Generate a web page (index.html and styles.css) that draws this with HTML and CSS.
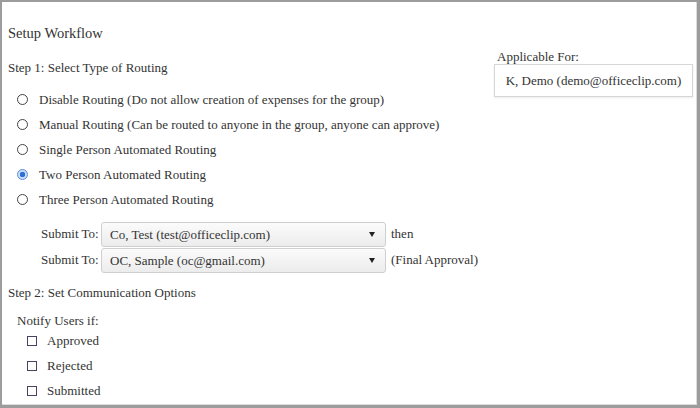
FILE: index.html
```html
<!DOCTYPE html>
<html lang="en">
<head>
    <meta charset="UTF-8">
    <meta name="viewport" content="width=device-width, initial-scale=1.0">
    <title>Setup Workflow</title>
    <link rel="stylesheet" href="styles.css">
</head>
<body>
    <div class="page">
        <h2 class="title">Setup Workflow</h2>
        <div class="layout">
            <section class="main">
                <h4 class="step">Step 1: Select Type of Routing</h4>
                <div class="options">
                    <label class="option"><input type="radio" name="routing"> Disable Routing (Do not allow creation of expenses for the group)</label>
                    <label class="option"><input type="radio" name="routing"> Manual Routing (Can be routed to anyone in the group, anyone can approve)</label>
                    <label class="option"><input type="radio" name="routing"> Single Person Automated Routing</label>
                    <label class="option"><input type="radio" name="routing" checked> Two Person Automated Routing</label>
                    <label class="option"><input type="radio" name="routing"> Three Person Automated Routing</label>
                </div>
                <div class="submits">
                    <div class="submit-row">
                        <span class="submit-label">Submit To:</span>
                        <span class="select-wrap">
                            <select>
                                <option>Co, Test (test@officeclip.com)</option>
                            </select>
                        </span>
                        <span class="after">then</span>
                    </div>
                    <div class="submit-row">
                        <span class="submit-label">Submit To:</span>
                        <span class="select-wrap">
                            <select>
                                <option>OC, Sample (oc@gmail.com)</option>
                            </select>
                        </span>
                        <span class="after">(Final Approval)</span>
                    </div>
                </div>
                <h4 class="step step-two">Step 2: Set Communication Options</h4>
                <div class="notify">
                    <div class="notify-title">Notify Users if:</div>
                    <label class="check"><input type="checkbox"> Approved</label>
                    <label class="check"><input type="checkbox"> Rejected</label>
                    <label class="check"><input type="checkbox"> Submitted</label>
                </div>
            </section>
            <aside class="applicable">
                <div class="applicable-label">Applicable For:</div>
                <div class="applicable-box">K, Demo (demo@officeclip.com)</div>
            </aside>
        </div>
    </div>
</body>
</html>
```

FILE: styles.css
```css
* { margin: 0; padding: 0; box-sizing: border-box; }
body { font-family: 'Liberation Serif', 'Times New Roman', serif; font-size: 13px; color: #333; background: #fff; }
.page { height: 408px; border: 2px solid #9c9c9c; border-right-width: 3px; border-bottom-width: 3px; box-shadow: inset -1px -1px 0 #dcdcdc; padding: 21px 4px 0 6px; overflow: hidden; }
.title { font-size: 14.5px; font-weight: normal; line-height: 20px; }
.layout { display: flex; justify-content: space-between; align-items: flex-start; }
.main { flex: 1; }
.step { font-size: 13px; font-weight: normal; line-height: 18px; margin-top: 16px; }
.options { margin-top: 10px; }
.option { display: flex; align-items: center; height: 25px; padding-left: 9px; }
.option input { appearance: none; width: 11px; height: 11px; border: 1px solid #444; border-radius: 50%; margin-right: 11px; background: #fff; }
.option input:checked { border-color: #5b8fd9; background: radial-gradient(circle, #2e6fd8 0 2.5px, #c9dcf6 3px); }
.submits { margin-top: 9px; padding-left: 33px; }
.submit-row { display: flex; align-items: center; height: 26px; }
.submit-label { width: 60px; }
.select-wrap { position: relative; }
.select-wrap select { appearance: none; width: 285px; height: 25px; padding-left: 8px; border: 1px solid #cfcfcf; border-radius: 3px; background: linear-gradient(#fbfbfb, #ececec); font-family: inherit; font-size: 13px; color: #333; }
.select-wrap::after { content: ''; position: absolute; right: 11px; top: 10px; border-left: 3.5px solid transparent; border-right: 3.5px solid transparent; border-top: 5px solid #222; pointer-events: none; }
.after { margin-left: 5px; }
.step-two { margin-top: 11px; }
.notify { margin-top: 11px; padding-left: 9px; }
.notify-title { line-height: 15px; }
.check { display: flex; align-items: center; height: 25px; padding-left: 10px; }
.check input { appearance: none; width: 10px; height: 10px; border: 1px solid #4a4060; margin-right: 10px; background: #fff; }
.applicable { width: 199px; margin-top: 6px; }
.applicable-label { padding-left: 3px; line-height: 15px; }
.applicable-box { height: 33px; line-height: 31px; text-align: center; border: 1px solid #d6d6d6; box-shadow: 0 1px 2px rgba(0, 0, 0, 0.08); }
```
